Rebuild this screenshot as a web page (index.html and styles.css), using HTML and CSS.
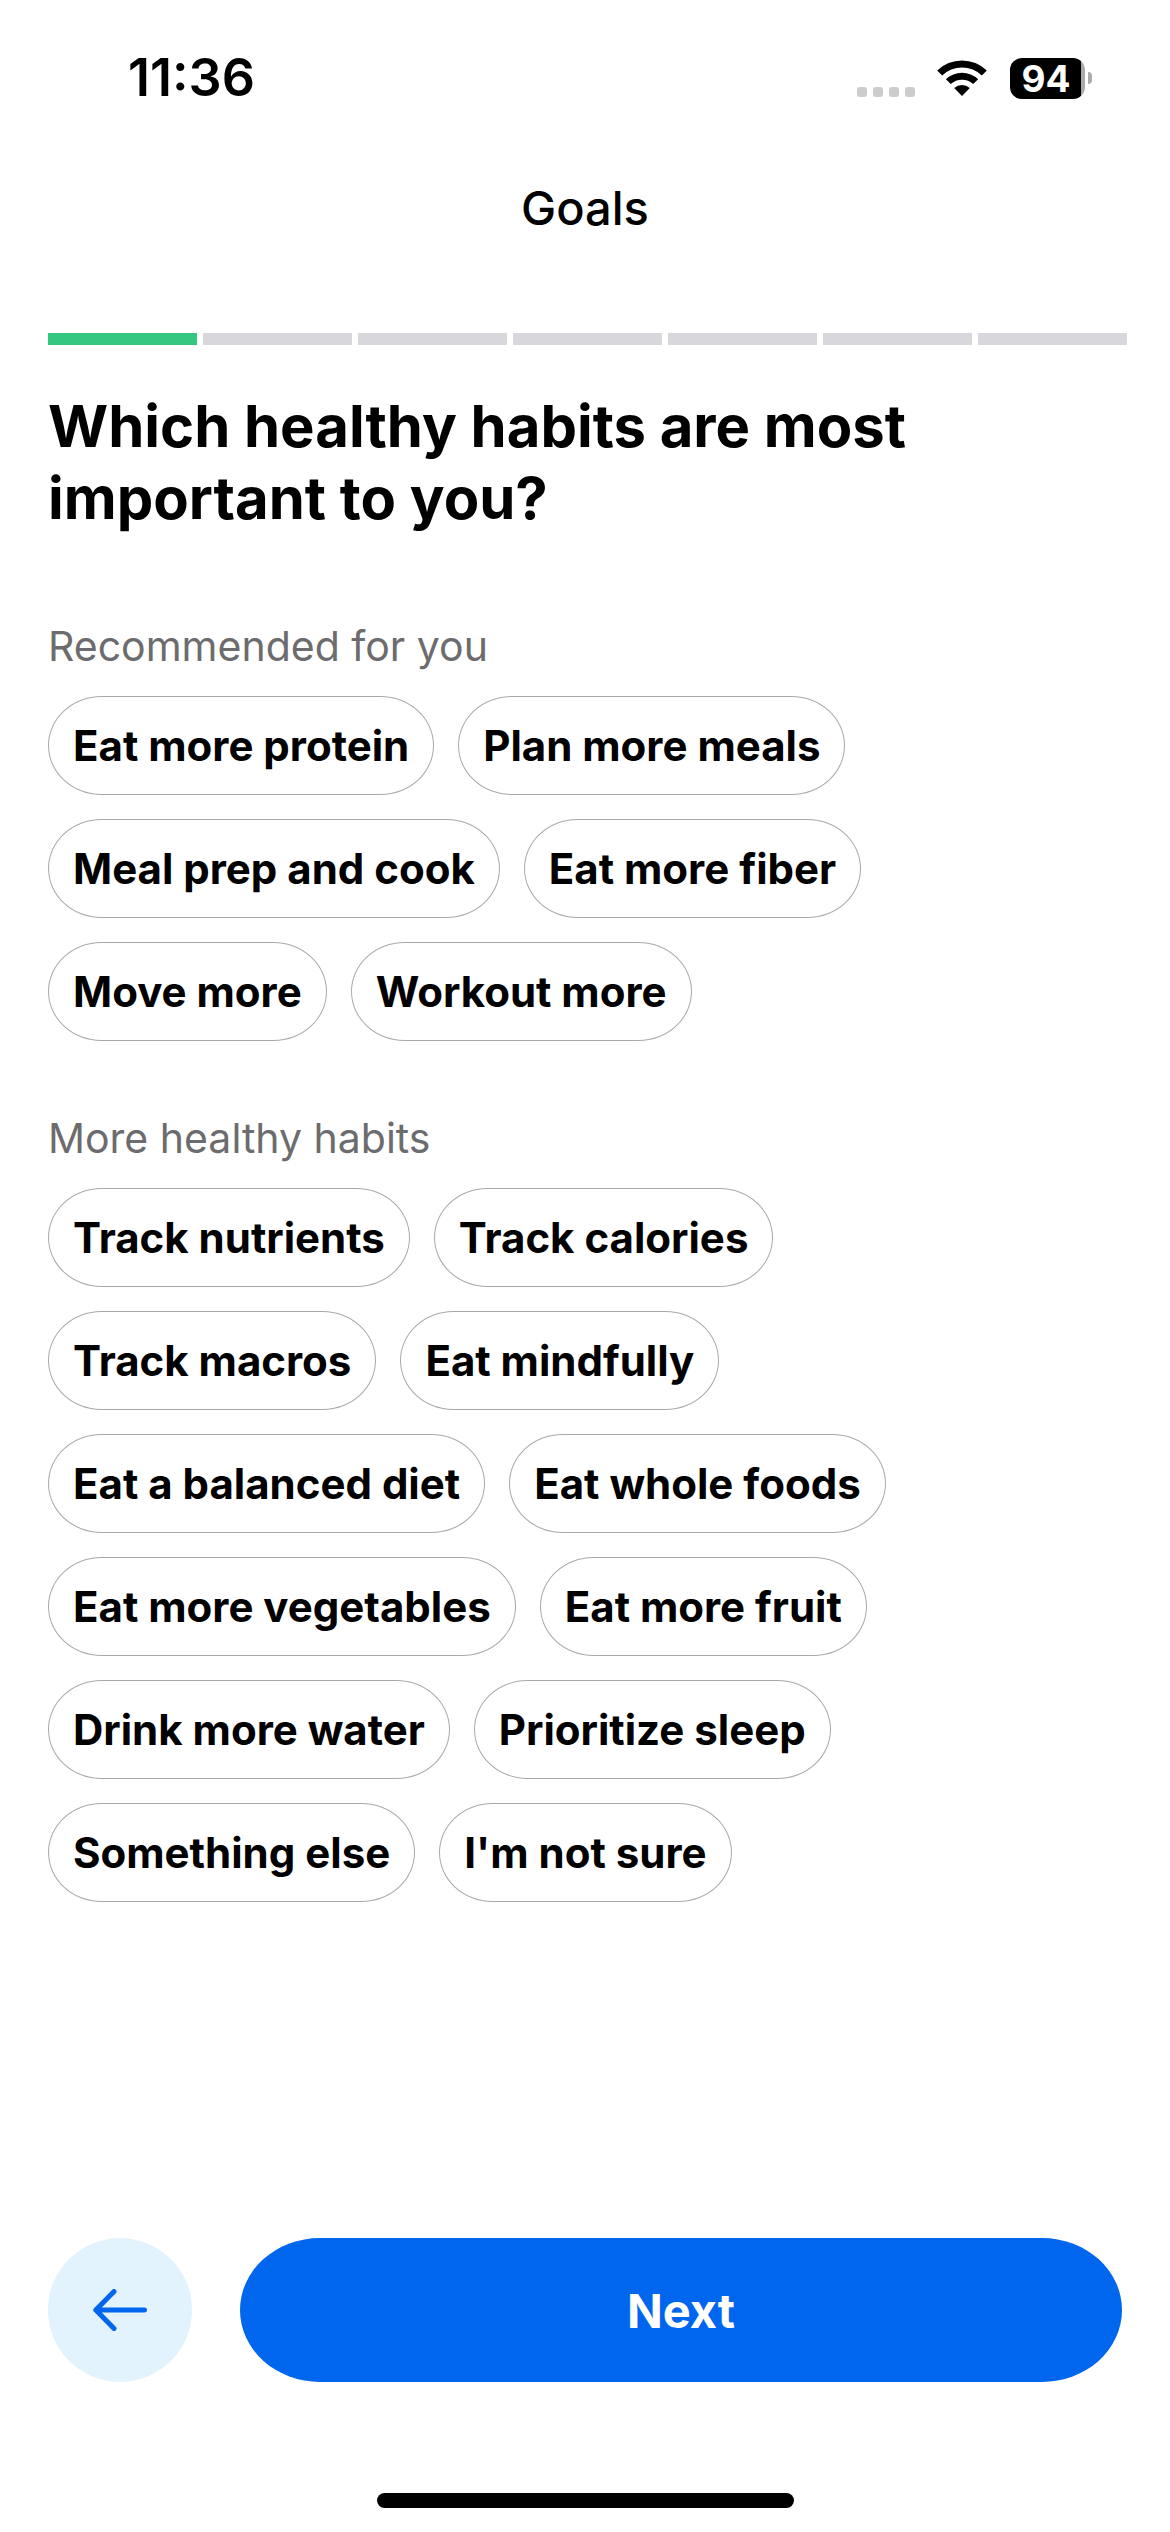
FILE: index.html
```html
<!DOCTYPE html>
<html lang="en">
<head>
<meta charset="utf-8">
<meta name="viewport" content="width=device-width, initial-scale=1">
<title>Goals</title>
<link rel="stylesheet" href="styles.css">
</head>
<body>
<div class="screen">
  <div class="status">
    <time class="status-time">11:36</time>
    <div class="status-icons">
      <svg class="cell" width="58" height="10" viewBox="0 0 58 10" aria-hidden="true">
        <rect width="10" height="10" rx="3"/><rect x="16" width="10" height="10" rx="3"/><rect x="32" width="10" height="10" rx="3"/><rect x="48" width="10" height="10" rx="3"/>
      </svg>
      <svg class="wifi" width="52" height="38" viewBox="0 0 52 38" aria-hidden="true">
        <path d="M1.200 11.500 A35.500 35.500 0 0 1 50.800 11.500 L45.800 16.500 A28.400 28.400 0 0 0 6.200 16.500 Z"/>
        <path d="M9.900 20.200 A23.500 23.500 0 0 1 42.100 20.200 L37.200 25.100 A16.400 16.400 0 0 0 14.800 25.100 Z"/>
        <path d="M18.200 29 A12 12 0 0 1 33.800 29 L26 37 Z"/>
      </svg>
      <div class="battery"><span class="battery-level">94</span><span class="battery-cap"></span></div>
    </div>
  </div>

  <header class="title">Goals</header>

  <div class="progress" role="progressbar" aria-label="Progress" aria-valuemin="0" aria-valuemax="7" aria-valuenow="1">
    <span class="step done"></span><span class="step"></span><span class="step"></span><span class="step"></span><span class="step"></span><span class="step"></span><span class="step"></span>
  </div>

  <main class="content">
    <h1 class="question">Which healthy habits are most important to you?</h1>

    <section class="group">
      <h2 class="group-title">Recommended for you</h2>
      <div class="chips">
        <button class="chip" type="button">Eat more protein</button>
        <button class="chip" type="button">Plan more meals</button>
        <button class="chip" type="button">Meal prep and cook</button>
        <button class="chip" type="button">Eat more fiber</button>
        <button class="chip" type="button">Move more</button>
        <button class="chip" type="button">Workout more</button>
      </div>
    </section>

    <section class="group">
      <h2 class="group-title">More healthy habits</h2>
      <div class="chips">
        <button class="chip" type="button">Track nutrients</button>
        <button class="chip" type="button">Track calories</button>
        <button class="chip" type="button">Track macros</button>
        <button class="chip" type="button">Eat mindfully</button>
        <button class="chip" type="button">Eat a balanced diet</button>
        <button class="chip" type="button">Eat whole foods</button>
        <button class="chip" type="button">Eat more vegetables</button>
        <button class="chip" type="button">Eat more fruit</button>
        <button class="chip" type="button">Drink more water</button>
        <button class="chip" type="button">Prioritize sleep</button>
        <button class="chip" type="button">Something else</button>
        <button class="chip" type="button">I'm not sure</button>
      </div>
    </section>
  </main>

  <footer class="footer">
    <div class="actions">
      <button class="back" type="button" aria-label="Back">
        <svg width="54" height="42" viewBox="0 0 54 42" aria-hidden="true">
          <path d="M51.500 21H3M21 2.500L2.800 21L21 39.500"/>
        </svg>
      </button>
      <button class="next" type="button">Next</button>
    </div>
    <div class="home"></div>
  </footer>
</div>
</body>
</html>
```
FILE: styles.css
```css
* {
  box-sizing: border-box;
}

body {
  margin: 0;
  background: #fff;
  color: #000;
  font-family: Inter, "Liberation Sans", sans-serif;
}

button {
  font: inherit;
  border: 0;
  cursor: pointer;
}

.screen {
  display: flex;
  flex-direction: column;
  min-height: 100vh;
}

/* Status bar */
.status {
  display: flex;
  justify-content: space-between;
  align-items: center;
  height: 156px;
  padding: 0 78px 0 128px;
}

.status-time {
  font-size: 52px;
  font-weight: 600;
  line-height: 60px;
}

.status-icons {
  display: flex;
  align-items: center;
}

.cell {
  align-self: flex-end;
  margin-bottom: 2px;
  fill: #ccc;
}

.wifi {
  margin: 0 22px 0 21px;
}

.battery {
  display: flex;
  align-items: center;
  gap: 3px;
}

.battery-level {
  width: 75px;
  height: 41px;
  padding-right: 3px;
  border-radius: 12px;
  background: linear-gradient(to right, #000 71px, #aaa 71px);
  color: #fff;
  font-size: 37px;
  font-weight: 700;
  line-height: 41px;
  text-align: center;
}

.battery-cap {
  width: 4px;
  height: 12px;
  border-radius: 0 4px 4px 0;
  background: #aaa;
}

.title {
  padding-top: 22px;
  font-size: 47px;
  font-weight: 500;
  line-height: 60px;
  text-align: center;
}

.progress {
  display: flex;
  gap: 6px;
  padding: 95px 43px 0 48px;
}

.step {
  flex: 1;
  height: 12px;
  background: #d8d8dc;
}

.step.done {
  background: #34c780;
}

/* Question and answers */
.content {
  padding: 45px 48px 48px;
}

.question {
  max-width: 960px;
  margin: 0 0 87px;
  font-size: 58px;
  font-weight: 700;
  line-height: 72px;
}

.group + .group {
  margin-top: 72px;
}

.group-title {
  margin: 0 0 24px;
  color: #6c6c6e;
  font-size: 41px;
  font-weight: 400;
  line-height: 51px;
}

.chips {
  display: flex;
  flex-wrap: wrap;
  gap: 24px;
  padding-right: 96px;
}

.chip {
  height: 99px;
  padding: 0 24px;
  border: 1px solid #aaa;
  border-radius: 54px / 50px;
  background: #fff;
  color: #000;
  font-size: 42px;
  font-weight: 700;
}

/* Bottom actions */
.footer {
  margin-top: auto;
}

.actions {
  display: flex;
  gap: 48px;
  padding: 0 48px;
}

.back {
  display: grid;
  place-items: center;
  width: 144px;
  height: 144px;
  padding: 0;
  border-radius: 50%;
  background: #e3f3fe;
}

.back svg {
  fill: none;
  stroke: #0066ee;
  stroke-width: 5;
  stroke-linecap: round;
  stroke-linejoin: round;
}

.next {
  flex: 1;
  height: 144px;
  border-radius: 80px / 72px;
  background: #0066ee;
  color: #fff;
  font-size: 47px;
  font-weight: 700;
}

.home {
  width: 417px;
  height: 15px;
  margin: 111px auto 24px;
  border-radius: 8px;
  background: #000;
}
```
